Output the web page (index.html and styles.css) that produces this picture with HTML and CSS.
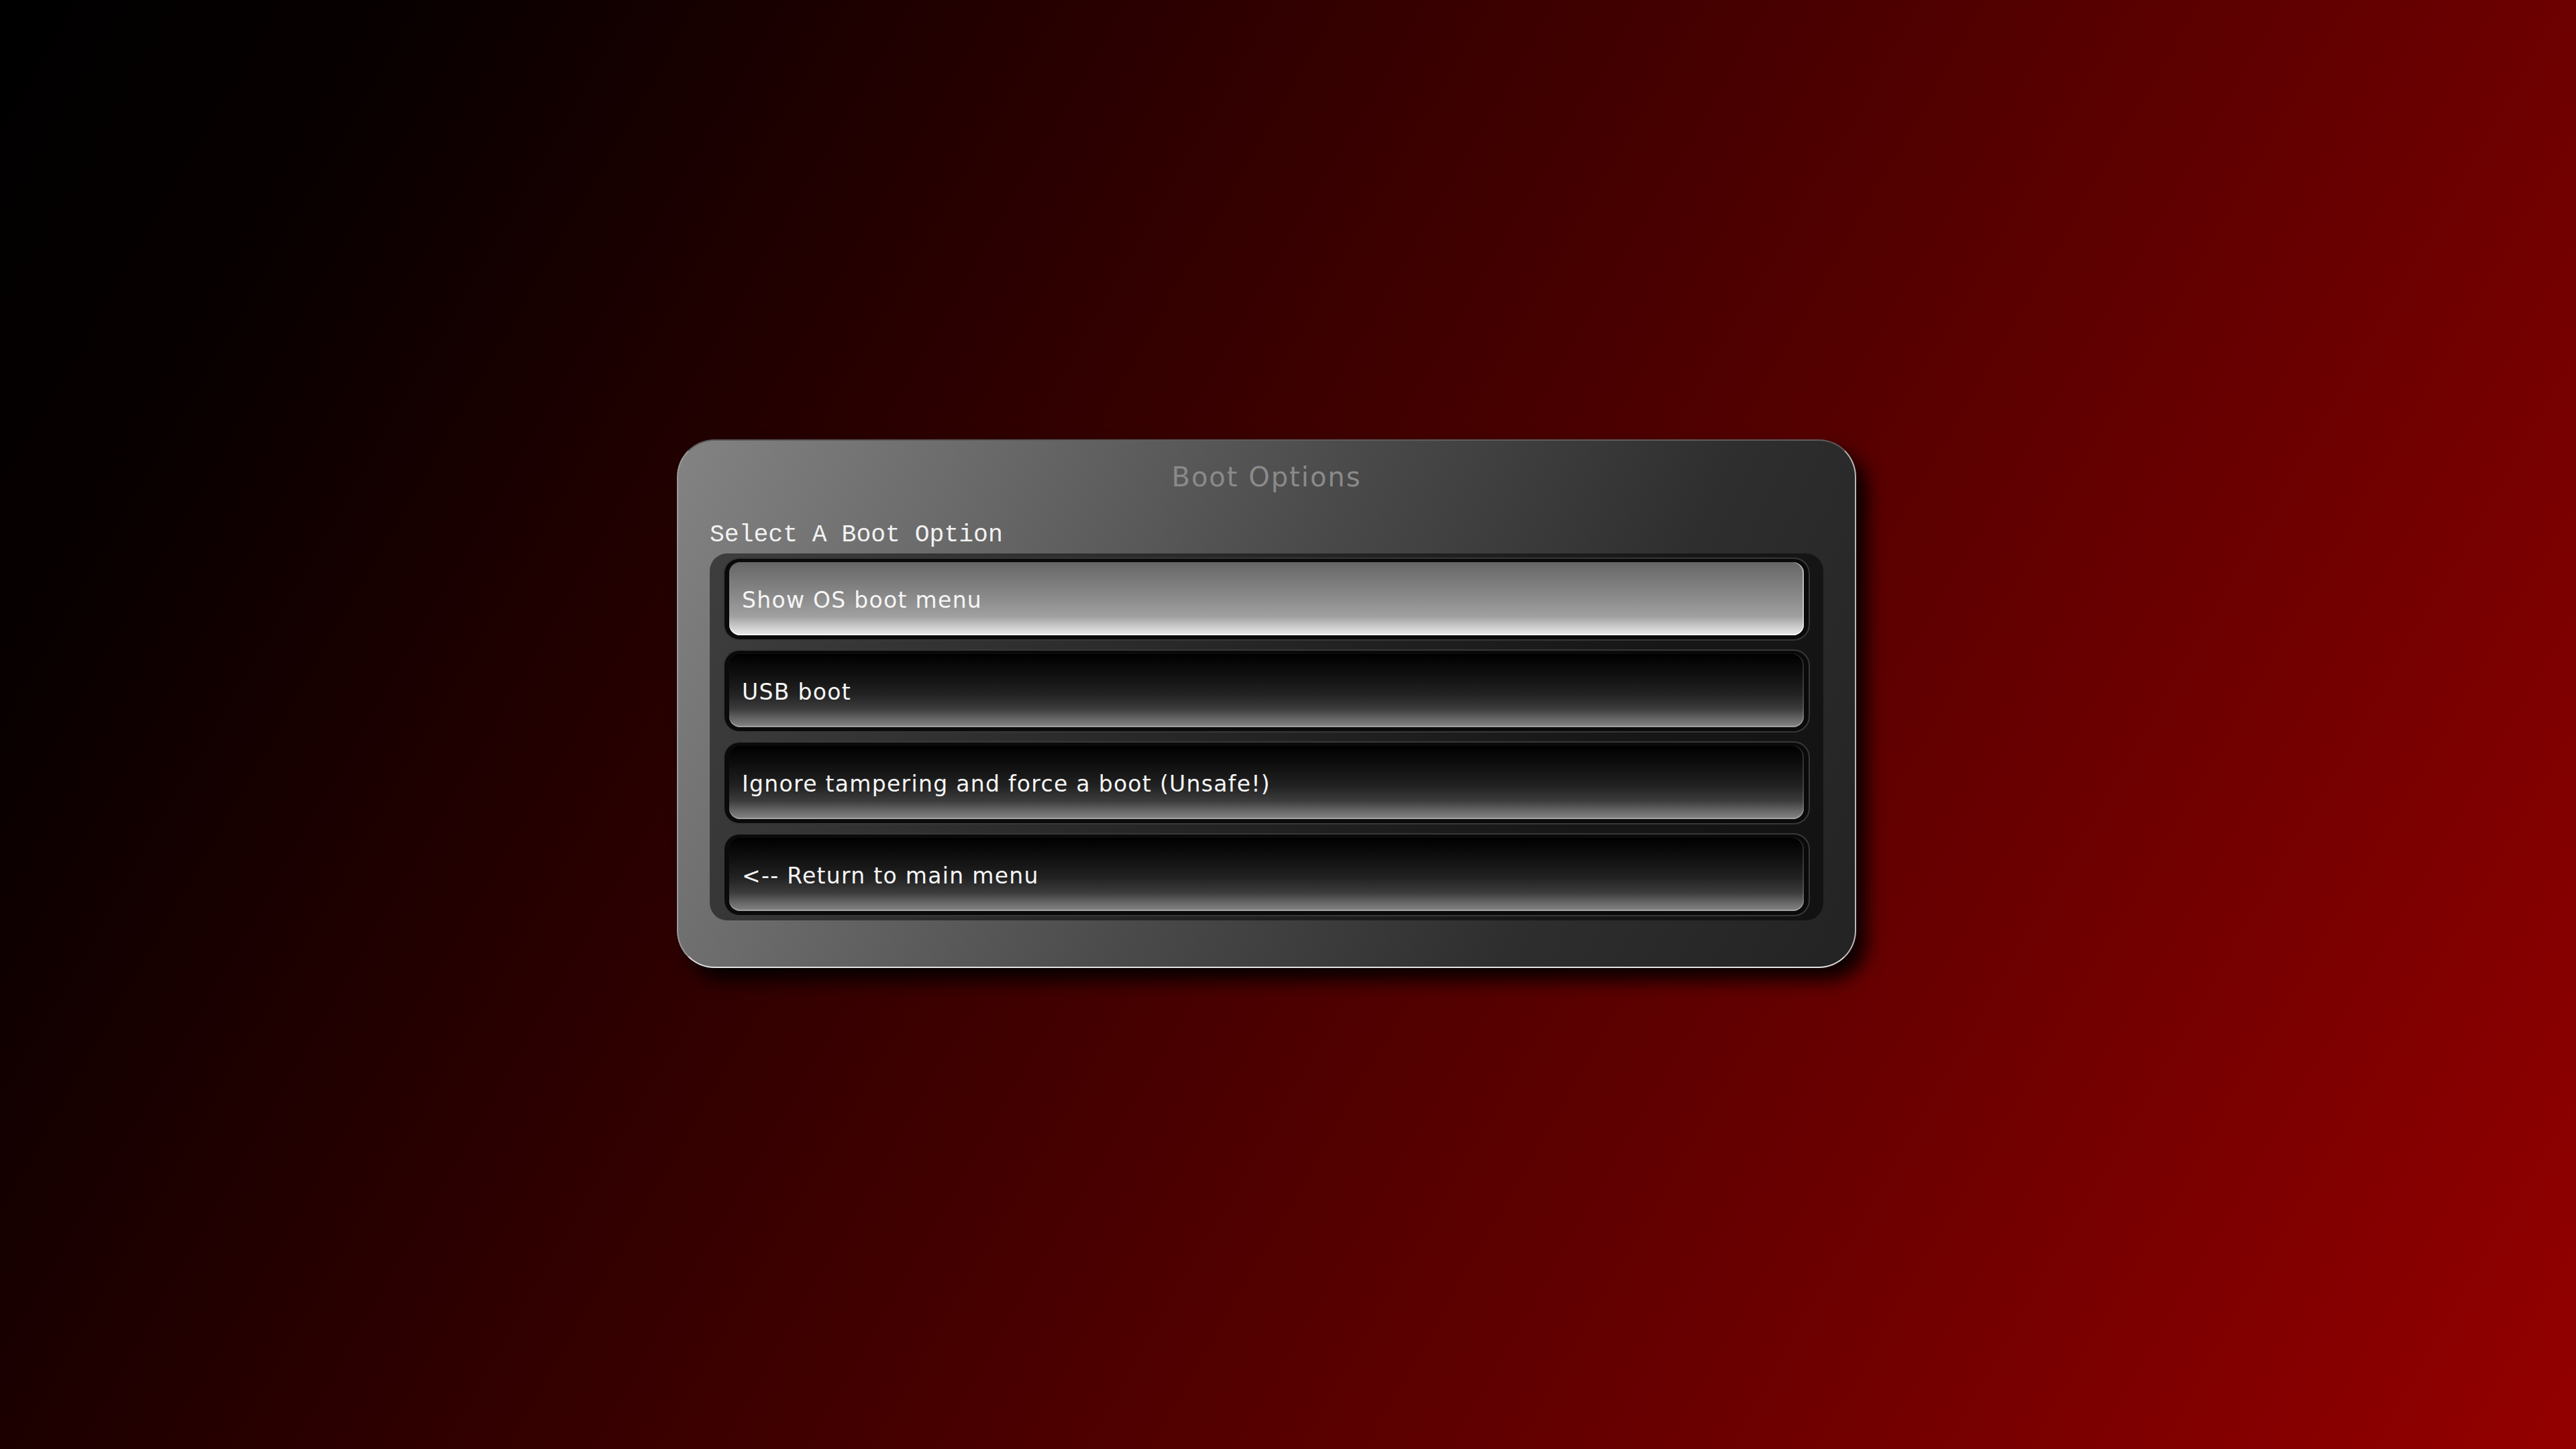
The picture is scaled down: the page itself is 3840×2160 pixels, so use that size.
FILE: index.html
```html
<!DOCTYPE html>
<html lang="en">
<head>
    <meta charset="UTF-8">
    <meta name="viewport" content="width=device-width, initial-scale=1.0">
    <title>Boot Options</title>
    <link rel="stylesheet" href="styles.css">
</head>
<body>
    <div id="main">
        <div class="panel">
            <div class="panel-title">Boot Options</div>
            <div class="prompt">Select A Boot Option</div>
            <div class="option-list">
                <div class="option selected">
                    <div class="option-face">Show OS boot menu</div>
                </div>
                <div class="option">
                    <div class="option-face">USB boot</div>
                </div>
                <div class="option">
                    <div class="option-face">Ignore tampering and force a boot (Unsafe!)</div>
                </div>
                <div class="option">
                    <div class="option-face">&lt;-- Return to main menu</div>
                </div>
            </div>
        </div>
    </div>
</body>
</html>
```

FILE: styles.css
```css
body{
    margin: 0;
    padding: 0;
    background: linear-gradient(120deg, #000000 0%, #080000 12%, #940000 100%);
    color: white;
}
#main{
    display: flex;
    min-height: 100vh;
    align-items: center;
    justify-content: center;
}
.panel{
    box-sizing: border-box;
    width: 1758px;
    margin-right: 64px;
    margin-bottom: 62px;
    padding: 29px 47px 69px;
    border: 2px solid;
    border-color: #5c5c5c #b8b8b8 #e2e2e2 #9a9a9a;
    border-radius: 56px;
    background: linear-gradient(115deg, #838383 0%, #6c6c6c 20%, #4a4a4a 48%, #2e2e2e 75%, #232323 100%);
    box-shadow: 16px 18px 28px rgba(0, 0, 0, 0.9);
}
.panel-title{
    padding-top: 2px;
    font-family: "DejaVu Sans", sans-serif;
    font-size: 40px;
    line-height: 46px;
    letter-spacing: 2px;
    text-align: center;
    color: #8a8a8a;
}
.prompt{
    margin-top: 41px;
    padding-top: 2px;
    font-family: "Liberation Mono", monospace;
    font-size: 36.4px;
    line-height: 42px;
    color: #f2f2f2;
}
.option-list{
    margin-top: 6px;
    padding: 6px 20px;
    display: flex;
    flex-direction: column;
    gap: 13px;
    border-radius: 26px;
    background-color: rgba(0, 0, 0, 0.5);
}
.option{
    box-sizing: border-box;
    height: 124px;
    padding: 5px 7px 6px;
    border: 2px solid rgba(140, 140, 140, 0.35);
    border-radius: 24px;
    background-color: #0a0a0a;
}
.option-face{
    box-sizing: border-box;
    display: flex;
    align-items: center;
    height: 100%;
    padding: 4px 0 0 19px;
    border-radius: 16px;
    font-family: "DejaVu Sans", sans-serif;
    font-size: 33px;
    letter-spacing: 1.3px;
    color: #f6f6f6;
    background: linear-gradient(180deg, #000000 0%, #0e0e0e 25%, #222222 55%, #3c3c3c 75%, #6a6a6a 90%, #868686 100%);
    box-shadow: inset 0 -2px 0 rgba(200, 200, 200, 0.45), inset -2px 0 0 rgba(200, 200, 200, 0.2);
}
.selected .option-face{
    background: linear-gradient(180deg, #666666 0%, #7a7a7a 25%, #8c8c8c 50%, #a0a0a0 74%, #c4c4c4 86%, #dedede 95%, #e6e6e6 100%);
    box-shadow: inset 0 -2px 0 rgba(255, 255, 255, 0.8), inset -2px 0 0 rgba(230, 230, 230, 0.6);
}
```
